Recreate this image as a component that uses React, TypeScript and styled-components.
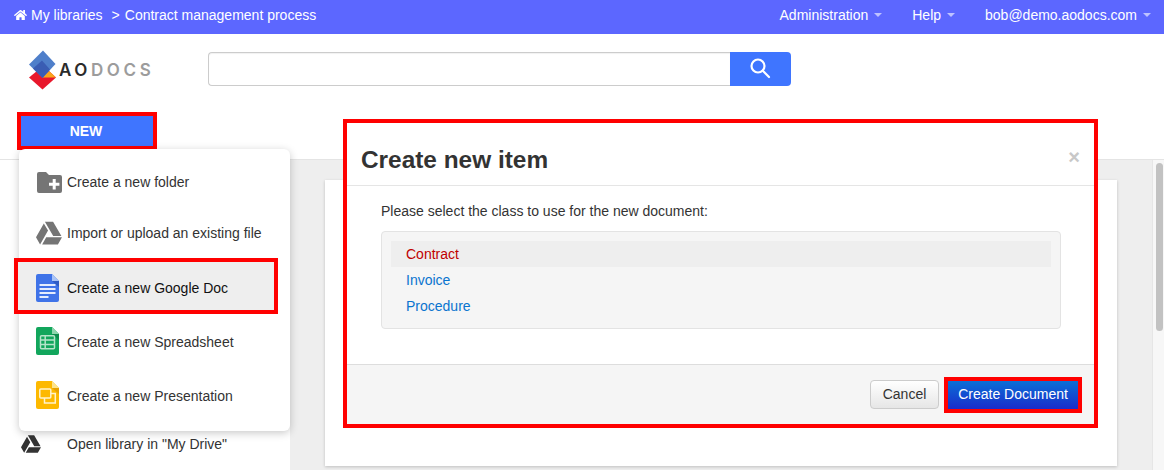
import React from "react";
import styled, { createGlobalStyle } from "styled-components";
import { FaHome, FaGoogleDrive } from "react-icons/fa";

const Global = createGlobalStyle`
  html, body { margin: 0; padding: 0; background: #fff; }
  body { font-family: "Liberation Sans", Arial, sans-serif; font-size: 14px; color: #333; }
  * { box-sizing: border-box; }
`;

const Page = styled.div`
  position: relative;
  width: 1164px;
  height: 470px;
  overflow: hidden;
  display: flex;
  flex-direction: column;
  background: #fff;
`;

const TopBar = styled.header`
  height: 34px;
  flex: none;
  background: #5c67ff;
  color: #fff;
  display: flex;
  align-items: center;
  justify-content: space-between;
  padding: 0 13px 4px 14px;
`;

const Crumbs = styled.div`
  display: flex;
  align-items: center;
  font-size: 14px;
  svg { width: 13px; height: 12px; margin-right: 4px; }
`;

const CrumbSep = styled.span`
  margin: 0 5px 0 9px;
`;

const Nav = styled.nav`
  display: flex;
  gap: 30px;
`;

const NavItem = styled.span`
  display: flex;
  align-items: center;
  gap: 6px;
  font-size: 14px;
  &::after {
    content: "";
    width: 0;
    height: 0;
    border-left: 4px solid transparent;
    border-right: 4px solid transparent;
    border-top: 4px solid rgba(255, 255, 255, 0.6);
  }
`;

const SearchRow = styled.div`
  height: 78px;
  flex: none;
  display: flex;
  padding: 16px 0 0 29px;
`;

const Logo = styled.div`
  width: 179px;
  height: 42px;
  display: flex;
  align-items: flex-start;
  svg { width: 28px; height: 40px; flex: none; }
`;

const LogoText = styled.span`
  margin: 10px 0 0 2px;
  font-family: Inter, "Liberation Sans", sans-serif;
  font-size: 17px;
  font-weight: 600;
  line-height: 20px;
  letter-spacing: 3.6px;
  color: #9c9c9c;
  b { font-weight: 600; color: #2b2b2b; }
`;

const SearchInput = styled.div`
  width: 522px;
  height: 34px;
  margin-top: 2px;
  border: 1px solid #ccc;
  border-right: 0;
  border-radius: 4px 0 0 4px;
  box-shadow: inset 0 1px 1px rgba(0, 0, 0, 0.06);
`;

const SearchButton = styled.div`
  width: 61px;
  height: 34px;
  margin-top: 2px;
  background: #3f75ff;
  border-radius: 0 4px 4px 0;
  display: flex;
  align-items: center;
  justify-content: center;
  svg { width: 22px; height: 22px; margin: -2px 2px 0 0; }
`;

const NewRow = styled.div`
  height: 47px;
  flex: none;
  padding-left: 17px;
`;

const NewButton = styled.div`
  width: 140px;
  height: 38px;
  border: 4px solid #f00;
  background: #3f75ff;
  color: #fff;
  font-size: 14px;
  font-weight: 700;
  padding-right: 2px;
  display: flex;
  align-items: center;
  justify-content: center;
`;

const Workspace = styled.div`
  flex: 1;
  display: grid;
  grid-template-columns: 290px 1fr 12px;
  border-top: 1px solid #e4e4e4;
  min-height: 0;
`;

const Sidebar = styled.aside`
  background: #fff;
  padding-top: 272px;
`;

const SideLink = styled.div`
  display: flex;
  align-items: center;
  height: 24px;
  padding-left: 20px;
  color: #333;
  svg { width: 22px; height: 20px; color: #333; margin-right: 25px; }
`;

const Main = styled.main`
  background: #eee;
  padding: 20px 35px 0;
`;

const Card = styled.section`
  height: 286px;
  background: #fff;
  box-shadow: 0 1px 3px rgba(0, 0, 0, 0.2);
`;

const ScrollTrack = styled.div`
  background: #f7f7f7;
  border-left: 1px solid #e6e6e6;
  padding: 3px 1px 0 3px;
`;

const ScrollThumb = styled.div`
  height: 168px;
  background: #c2c2c2;
  border-radius: 4px;
`;

const Menu = styled.div`
  position: absolute;
  left: 19px;
  top: 149px;
  width: 271px;
  height: 282px;
  background: #fff;
  border-radius: 6px;
  padding-top: 6px;
  box-shadow: 0 2px 8px rgba(0, 0, 0, 0.22);
  z-index: 2;
`;

const MenuItem = styled.div<{ $h: number; $nudge?: number; $framed?: boolean }>`
  height: ${(p) => p.$h}px;
  display: flex;
  align-items: center;
  font-size: 14px;
  color: ${(p) => (p.$framed ? "#111" : "#333")};
  padding-left: ${(p) => (p.$framed ? 18 : 17)}px;
  ${(p) => (p.$nudge && p.$nudge > 0 ? `padding-top: ${p.$nudge}px;` : "")}
  ${(p) => (p.$nudge && p.$nudge < 0 ? `padding-bottom: ${-p.$nudge}px;` : "")}
  ${(p) =>
    p.$framed
      ? `
    margin: 0 12px 0 -5px;
    border: 4px solid #f00;
    background: #eee;
    padding-top: 4px;
  `
      : ""}
`;

const MenuIcon = styled.span<{ $lift?: number }>`
  width: 31px;
  flex: none;
  display: flex;
  margin-top: ${(p) => -(p.$lift ?? 0)}px;
  svg { display: block; }
`;

const Modal = styled.div`
  position: absolute;
  left: 343px;
  top: 119px;
  width: 755px;
  height: 309px;
  border: 4px solid #f00;
  background: #fff;
  display: flex;
  flex-direction: column;
  z-index: 3;
`;

const ModalHead = styled.div`
  height: 63px;
  flex: none;
  border-bottom: 1px solid #e5e5e5;
  padding: 0 14px;
  display: flex;
  align-items: center;
  justify-content: space-between;
`;

const Title = styled.h3`
  margin: 11px 0 0;
  font-size: 24.4px;
  font-weight: 700;
  line-height: 30px;
  color: #333;
`;

const Close = styled.span`
  font-size: 20px;
  font-weight: 700;
  line-height: 20px;
  color: #c8c8c8;
  margin: 6px 0 0;
`;

const ModalBody = styled.div`
  flex: 1;
  padding: 16px 33px 0 34px;
`;

const Prompt = styled.p`
  margin: 0 0 11px;
  line-height: 18px;
  font-size: 14px;
  color: #333;
`;

const Well = styled.ul`
  margin: 0;
  height: 98px;
  padding: 9px;
  list-style: none;
  background: #f5f5f5;
  border: 1px solid #e3e3e3;
  border-radius: 4px;
`;

const ClassItem = styled.li<{ $active?: boolean }>`
  height: 26px;
  line-height: 26px;
  padding-left: 15px;
  font-size: 14px;
  color: ${(p) => (p.$active ? "#c00000" : "#0a74cf")};
  background: ${(p) => (p.$active ? "#eee" : "transparent")};
`;

const ModalFoot = styled.div`
  height: 60px;
  flex: none;
  background: #f5f5f5;
  border-top: 1px solid #ddd;
  display: flex;
  align-items: flex-start;
  justify-content: flex-end;
  padding: 12px 12px 0 0;
  gap: 5px;
`;

const CancelButton = styled.div`
  width: 69px;
  height: 29px;
  margin-top: 3px;
  padding-bottom: 2px;
  border: 1px solid #ccc;
  border-radius: 4px;
  background: linear-gradient(#fff, #e6e6e6);
  color: #333;
  font-size: 14px;
  display: flex;
  align-items: center;
  justify-content: center;
`;

const PrimaryButton = styled.div`
  width: 138px;
  height: 36px;
  padding-bottom: 2px;
  border: 4px solid #f00;
  background: linear-gradient(#0b6fd6, #1a2ccb);
  color: #fff;
  font-size: 14px;
  display: flex;
  align-items: center;
  justify-content: center;
`;

const FolderSlot = styled.span`
  width: 31px;
  flex: none;
  display: flex;
  padding-left: 1px;
`;

const FolderIcon = () => (
  <svg width="25" height="21" viewBox="0 0 25 21">
    <path d="M2 0h7l3 3h11a2 2 0 0 1 2 2v14a2 2 0 0 1-2 2H2a2 2 0 0 1-2-2V2a2 2 0 0 1 2-2z" fill="#757575" />
    <path d="M15.700 7h3v3.700h3.700v3h-3.700v3.700h-3v-3.700H12v-3h3.700z" fill="#fff" />
  </svg>
);

const GDoc = ({ fill, fold, shade, children }: { fill: string; fold: string; shade: string; children: React.ReactNode }) => (
  <svg width="23" height="28" viewBox="0 0 23 28">
    <path d="M2 0h14l7 7v19a2 2 0 0 1-2 2H2a2 2 0 0 1-2-2V2a2 2 0 0 1 2-2z" fill={fill} />
    <path d="M16 7h7v6z" fill={shade} />
    <path d="M16 0l7 7h-7z" fill={fold} />
    {children}
  </svg>
);

const DocLines = () => (
  <g fill="#e4ecfd">
    <rect x="3.500" y="10" width="16" height="2" />
    <rect x="3.500" y="14" width="16" height="2" />
    <rect x="3.500" y="18" width="16" height="2" />
    <rect x="3.500" y="22" width="9" height="2" />
  </g>
);

const SheetGrid = () => (
  <g fill="none" stroke="#b5e4c9" strokeWidth="1.500">
    <rect x="4.500" y="8.800" width="14" height="13" rx="1" />
    <path d="M4.500 13h14M4.500 17.400h14M9.200 8.800v13" />
  </g>
);

const SlideFrames = () => (
  <g fill="none" stroke="#fff3cc" strokeWidth="1.500">
    <rect x="3.800" y="8" width="11" height="9" rx="1" />
    <path d="M14.800 12.500h4.500v9.500H8.500v-5" />
  </g>
);

export default function App() {
  return (
    <Page>
      <Global />
      <TopBar>
        <Crumbs>
          <FaHome />
          My libraries
          <CrumbSep>&gt;</CrumbSep>
          Contract management process
        </Crumbs>
        <Nav>
          <NavItem>Administration</NavItem>
          <NavItem>Help</NavItem>
          <NavItem>bob@demo.aodocs.com</NavItem>
        </Nav>
      </TopBar>

      <SearchRow>
        <Logo>
          <svg viewBox="0 0 28 40">
            <path d="M0 27.500L8 21h12l7 6.500L13.500 39.500z" fill="#e8182c" />
            <path d="M13 27.500l7-6.500 7 6.500z" fill="#f9a51b" />
            <path d="M0 14.500L14 .500 26.500 14 13.500 28z" fill="#4f7fca" />
            <path d="M4 18.500L13 10.500 21 19.500 13.500 28z" fill="#3a5db3" />
          </svg>
          <LogoText>
            <b>AO</b>DOCS
          </LogoText>
        </Logo>
        <SearchInput />
        <SearchButton>
          <svg viewBox="0 0 22 22" fill="none" stroke="#fff" strokeWidth="2.200">
            <circle cx="9" cy="9" r="6.500" />
            <path d="M13.800 13.800L20 20" strokeLinecap="round" />
          </svg>
        </SearchButton>
      </SearchRow>

      <NewRow>
        <NewButton>NEW</NewButton>
      </NewRow>

      <Workspace>
        <Sidebar>
          <SideLink>
            <FaGoogleDrive />
            Open library in "My Drive"
          </SideLink>
        </Sidebar>
        <Main>
          <Card />
        </Main>
        <ScrollTrack>
          <ScrollThumb />
        </ScrollTrack>
      </Workspace>

      <Menu>
        <MenuItem $h={54}>
          <FolderSlot><FolderIcon /></FolderSlot>
          Create a new folder
        </MenuItem>
        <MenuItem $h={49} $nudge={-2}>
          <MenuIcon><FaGoogleDrive size={26} color="#757575" /></MenuIcon>
          Import or upload an existing file
        </MenuItem>
        <MenuItem $h={56} $framed>
          <MenuIcon><GDoc fill="#3f73e8" fold="#a9c3f5" shade="#2f5cc4"><DocLines /></GDoc></MenuIcon>
          Create a new Google Doc
        </MenuItem>
        <MenuItem $h={54} $nudge={2}>
          <MenuIcon $lift={2}><GDoc fill="#12a65c" fold="#8fd6ae" shade="#0e8c4d"><SheetGrid /></GDoc></MenuIcon>
          Create a new Spreadsheet
        </MenuItem>
        <MenuItem $h={54} $nudge={2}>
          <MenuIcon $lift={2}><GDoc fill="#fdb900" fold="#fde38a" shade="#e8a200"><SlideFrames /></GDoc></MenuIcon>
          Create a new Presentation
        </MenuItem>
      </Menu>

      <Modal>
        <ModalHead>
          <Title>Create new item</Title>
          <Close>×</Close>
        </ModalHead>
        <ModalBody>
          <Prompt>Please select the class to use for the new document:</Prompt>
          <Well>
            <ClassItem $active>Contract</ClassItem>
            <ClassItem>Invoice</ClassItem>
            <ClassItem>Procedure</ClassItem>
          </Well>
        </ModalBody>
        <ModalFoot>
          <CancelButton>Cancel</CancelButton>
          <PrimaryButton>Create Document</PrimaryButton>
        </ModalFoot>
      </Modal>
    </Page>
  );
}
